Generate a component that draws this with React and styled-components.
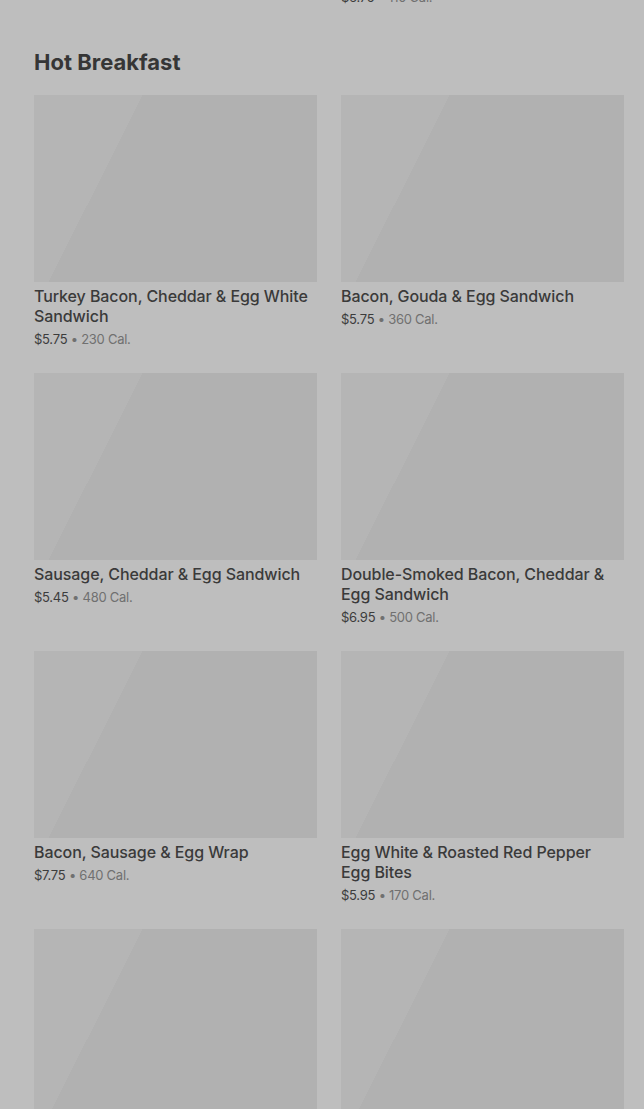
import styled, { createGlobalStyle } from 'styled-components'

const Color = {
  Page: '#bebebe',
  Image: '#b1b1b1',
  Shine: '#b5b5b5',
  Title: '#363636',
  Name: '#3a3a3a',
  Price: '#3c3c3c',
  Calories: '#707070'
}

const GlobalStyle = createGlobalStyle`
  html, body {
    margin: 0;
    background-color: ${Color.Page};
  }
  body {
    font-family: Inter, 'Liberation Sans', sans-serif;
    -webkit-font-smoothing: antialiased;
  }
`

const Layout = styled.main`
  min-height: 100vh;
  padding: 0 20px 0 34px;
  overflow: hidden;
`

const Grid = styled.div`
  display: grid;
  grid-template-columns: 1fr 1fr;
  column-gap: 24px;
  row-gap: 24px;
`

const Tail = styled(Grid)`
  margin-top: -16px;
`

const Title = styled.h2`
  margin: 41px 0 19px;
  font-size: 22px;
  line-height: 28px;
  font-weight: 700;
  letter-spacing: 0;
  color: ${Color.Title};
`

const Card = styled.article`
  display: flex;
  flex-direction: column;
  min-width: 0;
`

const Photo = styled.div`
  height: 187px;
  background: linear-gradient(116.7deg, ${Color.Shine} 97px, ${Color.Image} 97px);
`

const Name = styled.h3`
  margin: 4px 0 0;
  font-size: 16px;
  line-height: 20px;
  font-weight: 500;
  letter-spacing: -0.005em;
  color: ${Color.Name};
`

const Meta = styled.p`
  margin: 3px 0 0;
  font-size: 13px;
  line-height: 20px;
  letter-spacing: -0.02em;
  color: ${Color.Price};
`

const Calories = styled.span`
  color: ${Color.Calories};
`

const items = [
  { name: 'Turkey Bacon, Cheddar & Egg White Sandwich', price: '$5.75', cal: 230 },
  { name: 'Bacon, Gouda & Egg Sandwich', price: '$5.75', cal: 360 },
  { name: 'Sausage, Cheddar & Egg Sandwich', price: '$5.45', cal: 480 },
  { name: 'Double-Smoked Bacon, Cheddar & Egg Sandwich', price: '$6.95', cal: 500 },
  { name: 'Bacon, Sausage & Egg Wrap', price: '$7.75', cal: 640 },
  { name: 'Egg White & Roasted Red Pepper Egg Bites', price: '$5.95', cal: 170 },
  { name: 'Kale & Mushroom Egg Bites', price: '$5.45', cal: 230 },
  { name: 'Bacon & Gruyère Egg Bites', price: '$5.95', cal: 300 }
]

function Price({ price, cal }) {
  return (
    <Meta>
      {price} <Calories>• {cal} Cal.</Calories>
    </Meta>
  )
}

function App() {
  return (
    <Layout>
      <GlobalStyle />
      <Tail>
        <div />
        <Price price="$6.75" cal={110} />
      </Tail>
      <Title>Hot Breakfast</Title>
      <Grid>
        {items.map((item) => (
          <Card key={item.name}>
            <Photo />
            <Name>{item.name}</Name>
            <Price price={item.price} cal={item.cal} />
          </Card>
        ))}
      </Grid>
    </Layout>
  )
}

export default App
